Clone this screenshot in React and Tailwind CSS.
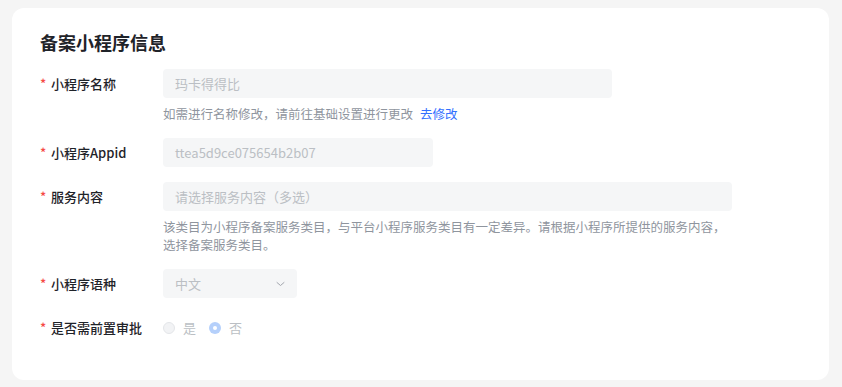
import React from 'react';

const font = { fontFamily: '"Noto Sans CJK SC", "Noto Sans", sans-serif' };

const Label = ({ children }) => (
  <div className="w-[123px] h-[29px] flex items-center shrink-0 text-[13px] font-medium text-[#1f2329]">
    <span className="text-[#f54a45] w-[11px]">*</span>
    <span>{children}</span>
  </div>
);

const Field = ({ width, children, className = '' }) => (
  <div
    className={`h-[29px] rounded-[4px] bg-[#f5f6f7] flex items-center px-3 text-[13px] text-[#bbbfc4] ${className}`}
    style={{ width }}
  >
    {children}
  </div>
);

const Help = ({ children }) => (
  <div className="mt-[7px] text-[12.5px] leading-[18px] text-[#8f959e]">{children}</div>
);

export default function App() {
  return (
    <div className="min-h-[387px] bg-[#f5f5f5] pt-[8px] px-[12px]" style={font}>
      <div className="bg-white rounded-[12px] h-[372px] w-[817px] pl-[28px] pt-[22px]">
        <h2 className="text-[18px] leading-[24px] font-semibold text-[#1f2329] mb-[15px]">备案小程序信息</h2>

        <div className="flex flex-col gap-[15px]">
          <div className="flex">
            <Label>小程序名称</Label>
            <div>
              <Field width={449}>玛卡得得比</Field>
              <Help>
                如需进行名称修改，请前往基础设置进行更改
                <span className="ml-[7px] text-[#3370ff]">去修改</span>
              </Help>
            </div>
          </div>

          <div className="flex">
            <Label>小程序Appid</Label>
            <Field width={270}>ttea5d9ce075654b2b07</Field>
          </div>

          <div className="flex">
            <Label>服务内容</Label>
            <div>
              <Field width={569} className="text-[#a2a6ad]">请选择服务内容（多选）</Field>
              <Help>
                该类目为小程序备案服务类目，与平台小程序服务类目有一定差异。请根据小程序所提供的服务内容，
                <br />
                选择备案服务类目。
              </Help>
            </div>
          </div>

          <div className="flex">
            <Label>小程序语种</Label>
            <Field width={134} className="justify-between pr-[12px]">
              <span>中文</span>
              <svg width="9" height="6" viewBox="0 0 9 6" fill="none">
                <path d="M1 1.5l3.5 3 3.5-3" stroke="#a2a6ad" strokeWidth="1" strokeLinecap="round" strokeLinejoin="round" />
              </svg>
            </Field>
          </div>

          <div className="flex">
            <Label>是否需前置审批</Label>
            <div className="flex items-center h-[29px] text-[13px] text-[#bbbfc4]">
              <span className="w-[12px] h-[12px] rounded-full bg-[#f2f3f5] border border-[#e4e6e9]" />
              <span className="ml-[8px]">是</span>
              <span className="ml-[13px] w-[12px] h-[12px] rounded-full bg-[#b5d0fb] flex items-center justify-center">
                <span className="w-[4px] h-[4px] rounded-full bg-white" />
              </span>
              <span className="ml-[8px]">否</span>
            </div>
          </div>
        </div>
      </div>
    </div>
  );
}
